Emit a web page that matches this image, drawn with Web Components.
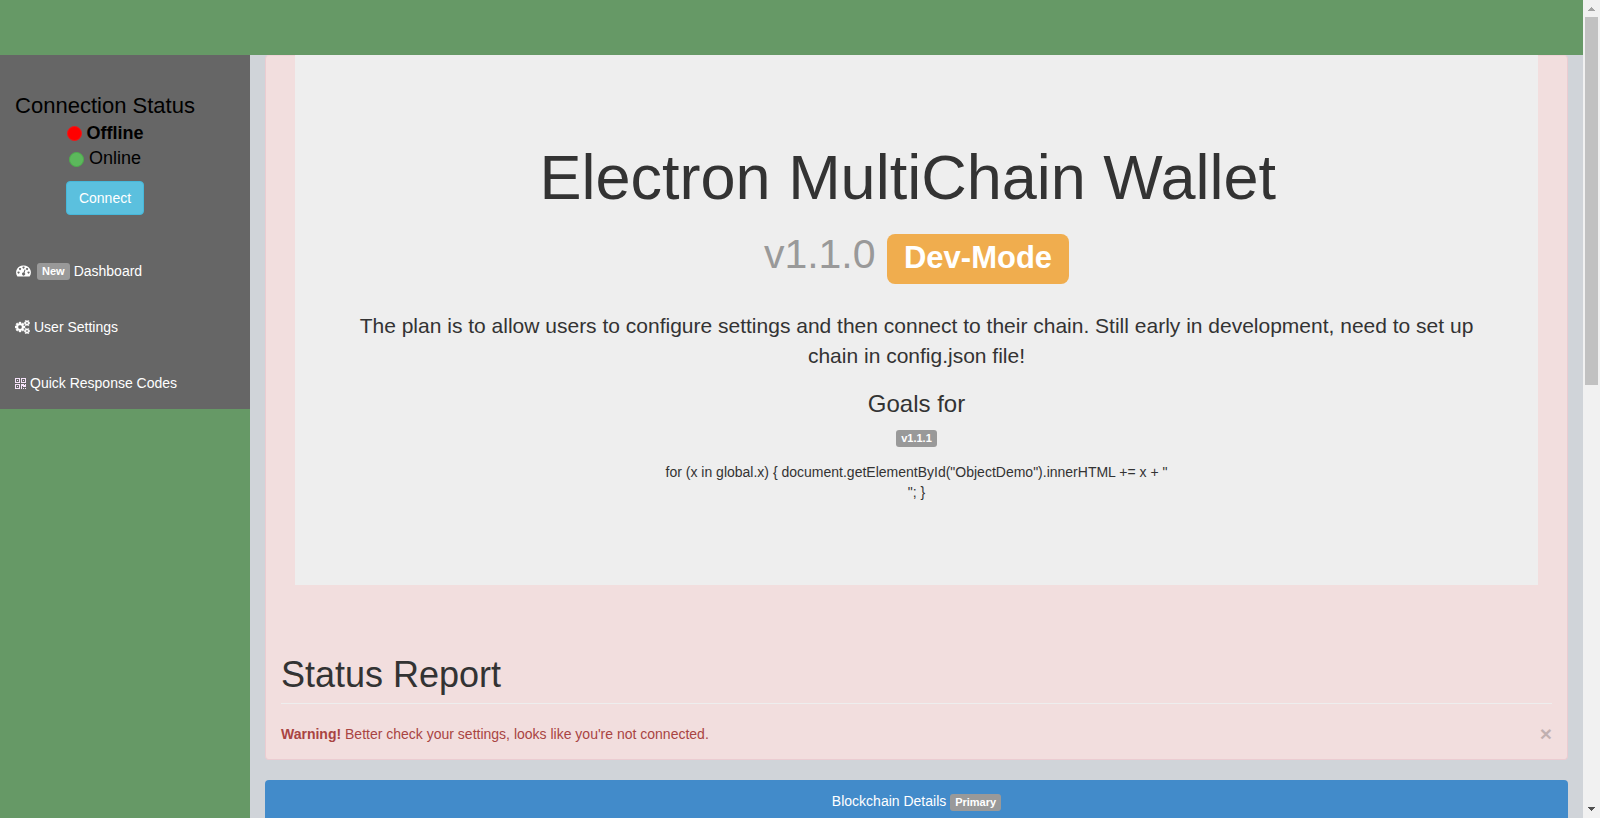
<!DOCTYPE html>
<html lang="en">
<head>
<meta charset="utf-8">
<title>Electron MultiChain Wallet</title>
<style>
  html, body { margin: 0; height: 100%; overflow: hidden; }
  body { font: 14px/20px "Liberation Sans", Arial, sans-serif; color: #333; background: #696; }
</style>
</head>
<body>
<wallet-app>
  <wallet-sidebar slot="side"></wallet-sidebar>
  <status-panel>
    <wallet-hero></wallet-hero>
  </status-panel>
  <details-bar>Blockchain Details <text-label>Primary</text-label></details-bar>
</wallet-app>

<script>
const define = (name, html) => customElements.define(name, class extends HTMLElement {
  constructor() {
    super();
    const t = document.createElement('template');
    t.innerHTML = html;
    this.attachShadow({ mode: 'open' }).append(t.content.cloneNode(true));
  }
});

define('text-label', `
<style>
  :host { display: inline-block; padding: 3px 5px; border-radius: 3px; background: #999; color: #fff;
    font-size: 11px; line-height: 11px; font-weight: bold; white-space: nowrap; }
</style><slot></slot>`);

define('scroll-rail', `
<style>
  :host { display: flex; flex-direction: column; background: #f1f1f1; }
  .cap { height: 17px; flex: none; display: block; }
  .track { flex: 1; padding: 0 2px; }
  .thumb { height: 47%; background: #c1c1c1; }
</style>
<svg class="cap" viewBox="0 0 17 17" width="17" shape-rendering="crispEdges"><path d="M8 7h1v1h1v1h1v1h1v1H5v-1h1V9h1V8h1z" fill="#a3a3a3"/></svg>
<div class="track"><div class="thumb"></div></div>
<svg class="cap" viewBox="0 0 17 17" width="17" shape-rendering="crispEdges"><path d="M5 6h7v1h-1v1h-1v1H9v1H8V9H7V8H6V7H5z" fill="#505050"/></svg>`);

define('wallet-app', `
<style>
  :host { display: grid; grid-template-columns: 1fr 17px; height: 100vh; }
  .page { display: grid; grid-template: 55px 1fr / 250px 1fr; min-width: 0; min-height: 0; overflow: hidden; }
  header { grid-column: 1 / 3; }
  main { display: flex; flex-direction: column; gap: 20px; padding: 0 15px; background: #d0d4d9; min-height: 0; overflow: hidden; }
</style>
<div class="page">
  <header></header>
  <slot name="side"></slot>
  <main><slot></slot></main>
</div>
<scroll-rail></scroll-rail>`);

define('wallet-sidebar', `
<style>
  :host { display: block; align-self: start; background: #666; color: #000; padding: 38px 0 0; }
  .status { width: 180px; margin-left: 15px; text-align: center; }
  h2 { margin: 0; font-size: 22px; line-height: 26px; font-weight: normal; white-space: nowrap; }
  .state { display: flex; justify-content: center; align-items: center; gap: 5px; font-size: 18px; line-height: 25px; padding-top: 2px; }
  .state + .state { padding: 0; }
  .dot { box-sizing: border-box; width: 15px; height: 15px; border-radius: 50%; border: 1px solid #f01818; background: #f00; }
  .dot.on { background: #5cb85c; border-color: #4cae4c; margin-top: 2px; }
  button { height: 34px; margin: 10px 0 28px; padding: 0 12px; border: 1px solid #46b8da; border-radius: 4px; background: #5bc0de; color: #fff; font: inherit; }
  nav { display: grid; gap: 36px; padding: 18px 15px 16px; }
  a { display: flex; align-items: center; height: 20px; color: #fff; text-decoration: none; }
  svg { fill: #fff; margin-right: 4px; }
  .dash { margin: 0 6px 0 1px; }
  text-label { margin-right: 4px; }
</style>
<section class="status">
  <h2>Connection Status</h2>
  <div class="state"><span class="dot"></span><b>Offline</b></div>
  <div class="state"><span class="dot on"></span><span>Online</span></div>
  <button type="button">Connect</button>
</section>
<nav>
  <a href="#dashboard"><svg class="dash" width="15" height="14" viewBox="0 0 15 14"><path fill-rule="evenodd" d="M7.500 1.500A7 7 0 0 0 1.400 12.500H13.600A7 7 0 0 0 7.500 1.500zM2.500 7.500a1 1 0 1 0 .1 0zM4 4a1 1 0 1 0 .1 0zM7.500 2.500a1 1 0 1 0 .1 0zM12.500 7.500a1 1 0 1 0 .1 0zM11 4a1 1 0 1 0 .1 0zM8.600 5.500L7.500 8.600a1.500 1.500 0 1 0 1 .3L9.500 5.800z"/></svg><text-label>New</text-label>Dashboard</a>
  <a href="#settings"><svg width="15" height="14" viewBox="0 0 1920 1792" stroke="#fff" stroke-width="50"><path d="M896 896q0-106-75-181t-181-75-181 75-75 181 75 181 181 75 181-75 75-181zm768 512q0-52-38-90t-90-38-90 38-38 90q0 53 37.500 90.500t90.500 37.500 90.500-37.500 37.500-90.500zm0-1024q0-52-38-90t-90-38-90 38-38 90q0 53 37.500 90.500t90.500 37.500 90.500-37.500 37.500-90.500zm-384 421v185q0 10-7 19.500t-16 10.500l-155 24q-11 35-32 76 34 48 90 115 7 11 7 20 0 12-7 19-23 30-82.500 89.500t-78.500 59.500q-11 0-21-7l-115-90q-37 19-77 31-11 108-23 155-7 24-30 24h-186q-11 0-20-7.500t-10-17.500l-23-153q-34-10-75-31l-118 89q-7 7-20 7-11 0-21-8-144-133-144-160 0-9 7-19 10-14 41-53t47-61q-23-44-35-82l-152-24q-10-1-17-9.500t-7-19.500v-185q0-10 7-19.500t16-10.500l155-24q11-35 32-76-34-48-90-115-7-11-7-20 0-12 7-20 22-30 82-89t79-59q11 0 21 7l115 90q34-18 77-32 11-108 23-154 7-24 30-24h186q11 0 20 7.500t10 17.500l23 153q34 10 75 31l118-89q8-7 20-7 11 0 21 8 144 133 144 160 0 8-7 19-12 16-42 54t-45 60q23 48 34 82l152 23q10 2 17 10.500t7 19.500zm640 533v140q0 16-149 31-12 27-30 52 51 113 51 138 0 4-4 7-122 71-124 71-8 0-46-47t-52-68q-20 2-30 2t-30-2q-14 21-52 68t-46 47q-2 0-124-71-4-3-4-7 0-25 51-138-18-25-30-52-149-15-149-31v-140q0-16 149-31 13-29 30-52-51-113-51-138 0-4 4-7 4-2 35-20t59-34 30-16q8 0 46 46.500t52 67.500q20-2 30-2t30 2q51-71 92-112l6-2q4 0 124 70 4 3 4 7 0 25-51 138 17 23 30 52 149 15 149 31zm0-1024v140q0 16-149 31-12 27-30 52 51 113 51 138 0 4-4 7-122 71-124 71-8 0-46-47t-52-68q-20 2-30 2t-30-2q-14 21-52 68t-46 47q-2 0-124-71-4-3-4-7 0-25 51-138-18-25-30-52-149-15-149-31V314q0-16 149-31 13-29 30-52-51-113-51-138 0-4 4-7 4-2 35-20t59-34 30-16q8 0 46 46.500t52 67.500q20-2 30-2t30 2q51-71 92-112l6-2q4 0 124 70 4 3 4 7 0 25-51 138 17 23 30 52 149 15 149 31z"/></svg>User Settings</a>
  <a href="#codes"><svg width="11" height="11" viewBox="0 0 11 11" shape-rendering="crispEdges" style="fill:#f6e2fa"><path fill-rule="evenodd" d="M0 0h5v5H0zM1 1v3h3V1zM6 0h5v5H6zM7 1v3h3V1zM0 6h5v5H0zM1 7v3h3V7zM2 2h1v1H2zM8 2h1v1H8zM2 8h1v1H2zM6 6h3v1h1V6h1v3H8V8H7v3H6zM8 10h1v1H8zM10 10h1v1h-1z"/></svg>Quick Response Codes</a>
</nav>`);

define('wallet-hero', `
<style>
  :host { display: block; padding: 88px 60px 83px; background: #eee; text-align: center; }
  h1 { margin: 0 0 27px; font-size: 63px; line-height: 69px; font-weight: normal; }
  small { color: #999; font-size: 41px; line-height: 41px; }
  h1 text-label { font-size: 31px; line-height: 31px; padding: 8px 17px 11px; border-radius: 8px; background: #f0ad4e; }
  .lead { margin: 0 0 20px; font-size: 21px; line-height: 30px; }
  h2 { margin: 0 0 10px; font-size: 24px; line-height: 26px; font-weight: normal; }
  .code { margin: 15px 0 0; }
</style>
<h1>Electron MultiChain Wallet&nbsp;<br><small>v1.1.0 <text-label>Dev-Mode</text-label></small></h1>
<p class="lead">The plan is to allow users to configure settings and then connect to their chain. Still early in development, need to set up chain in config.json file!</p>
<h2>Goals for</h2>
<text-label>v1.1.1</text-label>
<p class="code">for (x in global.x) { document.getElementById("ObjectDemo").innerHTML += x + "<br>"; }</p>`);

define('status-panel', `
<style>
  :host { display: block; flex: none; padding: 0 15px 15px; border: 1px solid #ebccd1; border-top-color: #efd3d7; border-radius: 4px; background: #f2dede; }
  .hero { margin: -1px 14px 0; }
  h2 { margin: 70px 0 20px; padding-bottom: 8px; border-bottom: 1px solid #eee; font-size: 36px; line-height: 40px; font-weight: normal; }
  .alert { display: flex; justify-content: space-between; align-items: center; color: #a94442; }
  p { margin: 0; }
  button { border: 0; padding: 0; background: none; color: #000; opacity: .2; font: bold 21px/20px "Liberation Sans", Arial, sans-serif; }
</style>
<div class="hero"><slot></slot></div>
<h2>Status Report</h2>
<div class="alert" role="alert"><p><b>Warning!</b> Better check your settings, looks like you're not connected.</p><button type="button" aria-label="Close">×</button></div>`);

define('details-bar', `
<style>
  :host { display: block; flex: none; padding: 11px 15px 20px; border-radius: 4px 4px 0 0; background: #428bca; color: #fff; text-align: center; }
</style><slot></slot>`);
</script>
</body>
</html>
